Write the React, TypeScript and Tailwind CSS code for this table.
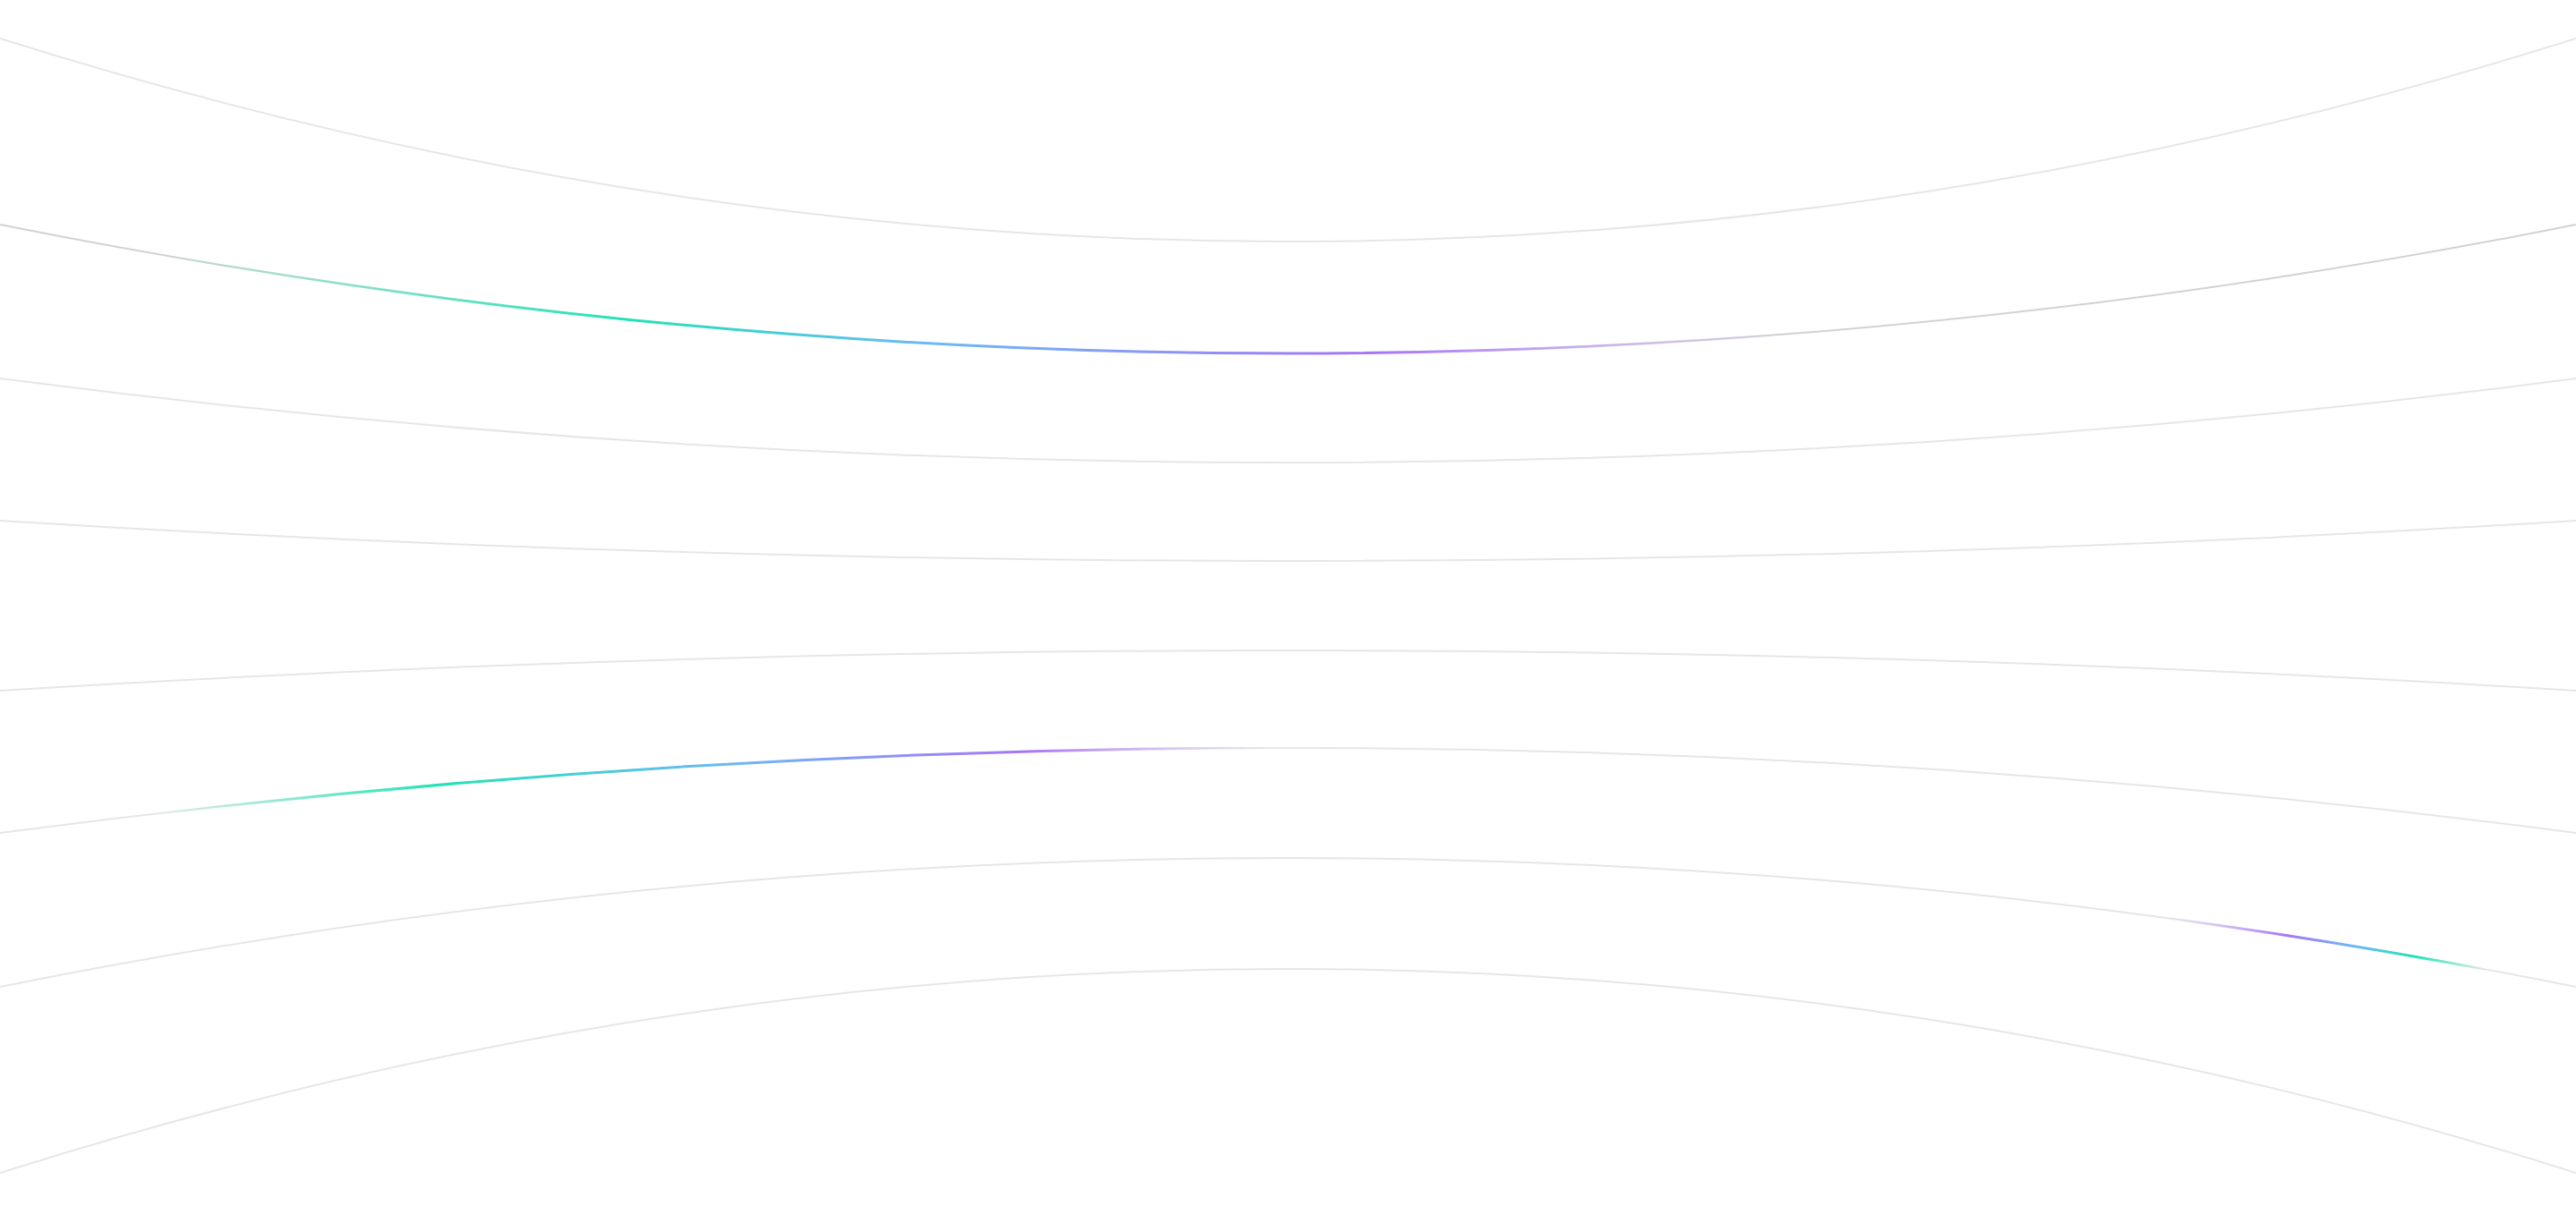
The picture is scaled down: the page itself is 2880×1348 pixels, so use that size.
import React from "react";

type Curve = { edge: number; ctrl: number; base: string };

// symmetric quadratic curves, edges at x=0 / x=2880, control at centre
const CURVES: Curve[] = [
  { edge: 43, ctrl: 497, base: "#e6e6e6" },
  { edge: 251, ctrl: 539, base: "#d2d2d2" },
  { edge: 423, ctrl: 611, base: "#e6e6e6" },
  { edge: 582, ctrl: 672, base: "#e6e6e6" },
  { edge: 772, ctrl: 682, base: "#e6e6e6" },
  { edge: 931, ctrl: 741, base: "#e6e6e6" },
  { edge: 1103, ctrl: 815, base: "#e6e6e6" },
  { edge: 1311, ctrl: 855, base: "#e6e6e6" },
];

const pathFor = (c: Curve) => `M0 ${c.edge} Q1440 ${c.ctrl} 2880 ${c.edge}`;

type Beam = { curve: number; x1: number; x2: number; g: number; b: number; p: number };

const BEAMS: Beam[] = [
  { curve: 1, x1: 180, x2: 2020, g: 0.28, b: 0.47, p: 0.74 },
  { curve: 5, x1: 180, x2: 1420, g: 0.25, b: 0.51, p: 0.78 },
  { curve: 6, x1: 2780, x2: 2420, g: 0.22, b: 0.42, p: 0.62 },
];

export default function App() {
  return (
    <div className="w-full h-[1348px] bg-white overflow-hidden">
      <svg
        className="w-full h-full block"
        viewBox="0 0 2880 1348"
        preserveAspectRatio="none"
        fill="none"
      >
        <defs>
          {BEAMS.map((bm, i) => (
            <linearGradient
              key={i}
              id={`beam-${i}`}
              gradientUnits="userSpaceOnUse"
              x1={bm.x1}
              y1={0}
              x2={bm.x2}
              y2={0}
            >
              <stop offset="0" stopColor="#2ee6b8" stopOpacity="0" />
              <stop offset={bm.g} stopColor="#22e3b4" />
              <stop offset={bm.b} stopColor="#6cb8f8" />
              <stop offset={bm.p} stopColor="#a774f7" />
              <stop offset="1" stopColor="#c9a8fb" stopOpacity="0" />
            </linearGradient>
          ))}
        </defs>

        {CURVES.map((c, i) => (
          <path key={i} d={pathFor(c)} stroke={c.base} strokeWidth={2} />
        ))}

        {BEAMS.map((bm, i) => (
          <path
            key={i}
            d={pathFor(CURVES[bm.curve])}
            stroke={`url(#beam-${i})`}
            strokeWidth={3}
            strokeLinecap="round"
          />
        ))}
      </svg>
    </div>
  );
}
